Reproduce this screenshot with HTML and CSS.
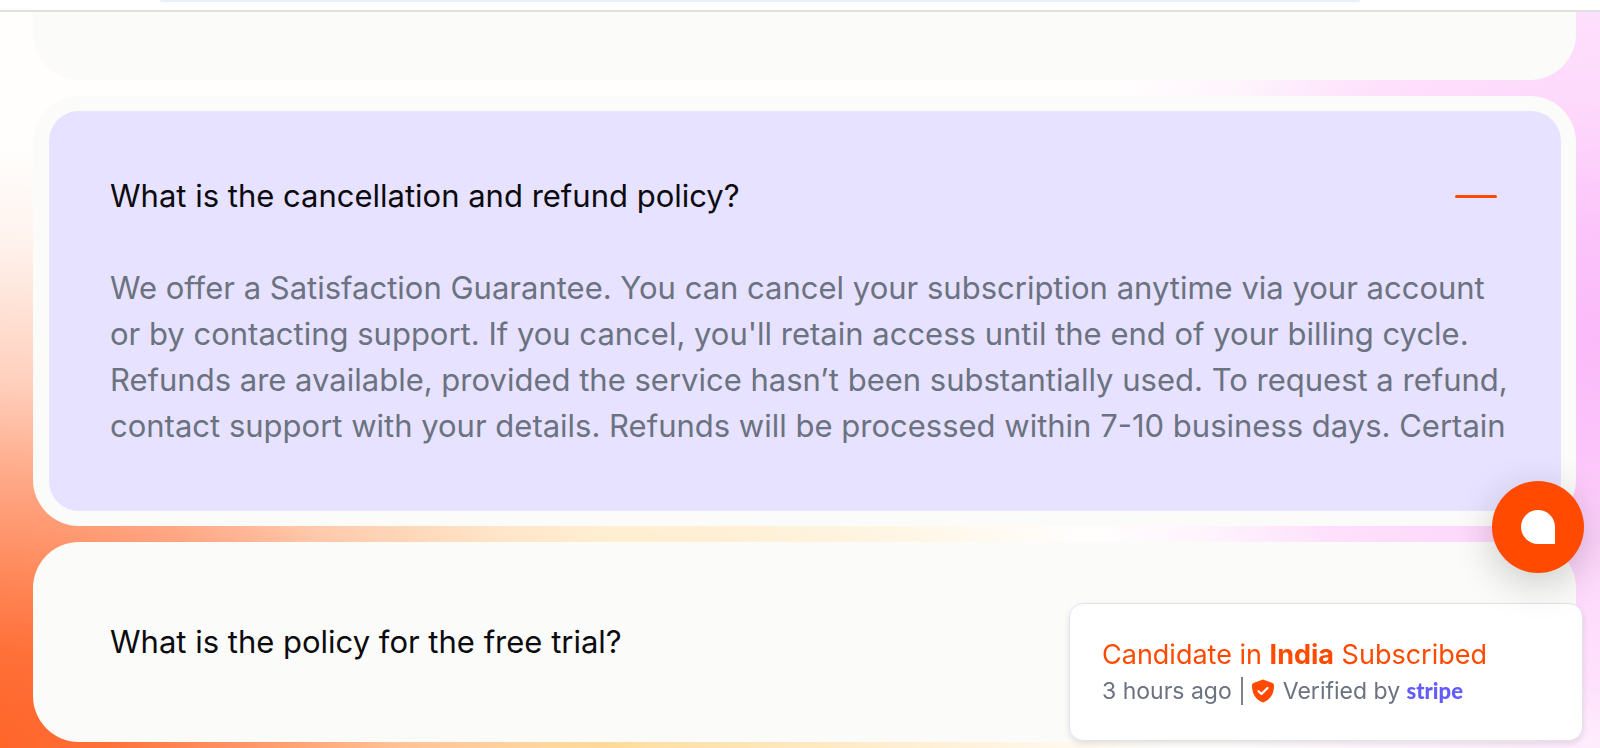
FILE: index.html
```html
<!DOCTYPE html>
<html lang="en">
<head>
    <meta charset="UTF-8">
    <meta name="viewport" content="width=device-width, initial-scale=1.0">
    <title>FAQ</title>
    <link rel="stylesheet" href="styles.css">
</head>
<body>
    <header class="topbar">
        <div class="topbar-pill"></div>
    </header>
    <main class="faq">
        <div class="card card-cut"></div>
        <section class="card card-open">
            <div class="card-inner">
                <h3><button class="question" type="button" aria-expanded="true" aria-controls="refund-answer">
                    What is the cancellation and refund policy?
                    <span class="minus"></span>
                </button></h3>
                <p class="answer" id="refund-answer">We offer a Satisfaction Guarantee. You can cancel your subscription anytime via your account or by contacting support. If you cancel, you'll retain access until the end of your billing cycle. Refunds are available, provided the service hasn’t been substantially used. To request a refund, contact support with your details. Refunds will be processed within 7-10 business days. Certain</p>
            </div>
        </section>
        <section class="card card-closed">
            <h3><button class="question" type="button" aria-expanded="false">What is the policy for the free trial?</button></h3>
        </section>
    </main>

    <aside class="toast">
        <p class="toast-title">Candidate in <strong>India</strong> Subscribed</p>
        <p class="toast-meta">
            <span>3 hours ago</span>
            <span class="divider"></span>
            <svg class="shield" viewBox="0 0 22 24" aria-hidden="true">
                <path fill="#ff4a00" d="M11 0.5 L20.5 4 Q22 4.600 22 6.500 C22 14 19 20.500 11 23.500 C3 20.500 0 14 0 6.500 Q0 4.600 1.500 4 Z"/>
                <path fill="none" stroke="#fff" stroke-width="2.200" stroke-linecap="round" stroke-linejoin="round" d="M6.500 12.200 L9.500 15 L15.500 9"/>
            </svg>
            <span>Verified by <span class="stripe">stripe</span></span>
        </p>
    </aside>

    <button class="chat" type="button" aria-label="Open chat">
        <svg viewBox="0 0 34 34" aria-hidden="true">
            <path fill="#fff" d="M17 0 A17 17 0 0 1 34 17 V34 H17 A17 17 0 0 1 17 0 Z"/>
        </svg>
    </button>
</body>
</html>
```
FILE: styles.css
```css
* {
    box-sizing: border-box;
}
body {
    margin: 0;
    min-height: 100vh;
    font-family: Inter, "Liberation Sans", sans-serif;
    background:
        radial-gradient(ellipse 540px 560px at 100% 340px,
            rgba(252, 186, 250, 1) 0%,
            rgba(252, 186, 250, 0.85) 20%,
            rgba(252, 186, 250, 0.55) 42%,
            rgba(252, 186, 250, 0.45) 60%,
            rgba(252, 186, 250, 0.15) 80%,
            rgba(252, 186, 250, 0) 100%),
        radial-gradient(ellipse 650px 600px at 0 100%,
            rgba(255, 101, 41, 1) 0%,
            rgba(255, 101, 41, 0.93) 16%,
            rgba(255, 101, 41, 0.78) 28%,
            rgba(255, 101, 41, 0.56) 45%,
            rgba(255, 101, 41, 0.3) 61%,
            rgba(255, 101, 41, 0.07) 85%,
            rgba(255, 101, 41, 0) 100%),
        radial-gradient(ellipse 560px 400px at 38% 100%,
            rgba(255, 221, 159, 1) 0%,
            rgba(255, 221, 159, 0) 100%),
        #fffefd;
}
h3,
p {
    margin: 0;
    font-weight: 400;
}
.topbar {
    height: 12px;
    background: #fff;
    border-bottom: 2px solid #dfe1e0;
}
.topbar-pill {
    width: 75%;
    height: 2px;
    margin-left: 10%;
    background: #e8effa;
    border-radius: 0 0 16px 16px;
}
.faq {
    display: flex;
    flex-direction: column;
    gap: 16px;
    padding: 0 24px 6px 33px;
}
.card {
    background: #fbfbf9;
    border-radius: 46px;
}
.card-cut {
    height: 68px;
    border-radius: 0 0 46px 46px;
}
.card-open {
    padding: 15px 15px 15px 16px;
}
.card-inner {
    padding: 62px 52px 62px 61px;
    background: #e7e2ff;
    border-radius: 30px;
}
.card-closed {
    padding: 77px;
}
.question {
    display: flex;
    justify-content: space-between;
    align-items: center;
    width: 100%;
    padding: 0 12px 0 0;
    border: none;
    background: none;
    color: #0b0b10;
    font: 400 31px/46px Inter, "Liberation Sans", sans-serif;
    text-align: left;
    cursor: pointer;
}
.minus {
    width: 42px;
    height: 3px;
    background: #ff4a00;
    border-radius: 2px;
}
.answer {
    margin-top: 46px;
    color: #6b7280;
    font-size: 31px;
    line-height: 46px;
}
.toast {
    position: fixed;
    right: 17px;
    bottom: 7px;
    width: 514px;
    padding: 33px 32px 31px;
    background: #fff;
    border: 1px solid #e1e3ea;
    border-radius: 14px;
    box-shadow: 0 3px 6px rgba(0, 0, 0, 0.1);
}
.toast-title {
    color: #ff4a00;
    font-size: 27px;
    line-height: 36px;
}
.toast-title strong {
    font-weight: 700;
}
.toast-meta {
    display: flex;
    align-items: center;
    gap: 9px;
    color: #6b7280;
    font-size: 23px;
    line-height: 36px;
}
.divider {
    width: 2px;
    height: 28px;
    background: #7b828f;
}
.shield {
    width: 22px;
    height: 24px;
}
.stripe {
    color: #635bff;
    font-family: Lato, sans-serif;
    font-weight: 900;
    font-size: 22px;
}
.chat {
    position: fixed;
    right: 16px;
    bottom: 175px;
    display: flex;
    align-items: center;
    justify-content: center;
    width: 92px;
    height: 92px;
    padding: 0;
    border: none;
    border-radius: 50%;
    background: #ff4a00;
    box-shadow: 0 10px 40px rgba(0, 0, 0, 0.2);
    cursor: pointer;
}
.chat svg {
    width: 34px;
    height: 34px;
}
```
